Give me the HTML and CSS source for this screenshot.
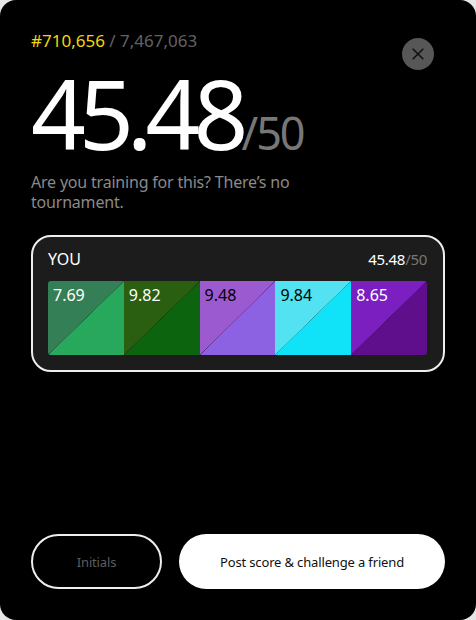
FILE: index.html
```html
<!DOCTYPE html>
<html lang="en">
<head>
<meta charset="utf-8">
<title>Score</title>
<link rel="stylesheet" href="styles.css">
</head>
<body>
<div class="panel">
  <button class="close" aria-label="Close">
    <svg width="14" height="14" viewBox="0 0 14 14"><path d="M2.2 2.2L11.8 11.8M11.8 2.2L2.2 11.8" stroke="#111" stroke-width="1.6" stroke-linecap="round"/></svg>
  </button>
  <div class="rank"><span class="rank-pos">#710,656</span> / 7,467,063</div>
  <div class="score"><span class="score-val">45.48</span><span class="score-max">/50</span></div>
  <p class="note">Are you training for this? There’s no tournament.</p>

  <div class="card">
    <div class="card-head">
      <span class="who">YOU</span>
      <span class="total">45.48<span class="total-max">/50</span></span>
    </div>
    <div class="bar">
      <div class="seg seg-1">7.69</div>
      <div class="seg seg-2">9.82</div>
      <div class="seg seg-3">9.48</div>
      <div class="seg seg-4">9.84</div>
      <div class="seg seg-5">8.65</div>
    </div>
  </div>

  <div class="actions">
    <button class="btn btn-ghost">Initials</button>
    <button class="btn btn-solid">Post score &amp; challenge a friend</button>
  </div>
</div>
</body>
</html>
```
FILE: styles.css
```css
* { box-sizing: border-box; }

html, body {
  margin: 0;
  height: 100%;
  background: #e6e6e6;
}

body {
  font-family: "Noto Sans", "Open Sans", sans-serif;
  color: #fff;
}

.panel {
  position: relative;
  height: 620px;
  background: #000;
  border-radius: 16px;
  padding: 29px 31px 31px;
  display: flex;
  flex-direction: column;
}

.close {
  position: absolute;
  top: 38px;
  right: 42px;
  width: 32px;
  height: 32px;
  border: 0;
  border-radius: 50%;
  background: #575757;
  display: flex;
  align-items: center;
  justify-content: center;
  padding: 0;
}

.rank {
  font-size: 17px;
  line-height: 24px;
  color: #626262;
}
.rank-pos { color: #f4d40a; }

.score {
  margin-top: 12px;
  line-height: 96px;
  height: 96px;
  white-space: nowrap;
}
.score-val {
  font-size: 96px;
  letter-spacing: -7px;
  color: #fff;
}
.score-max {
  font-size: 45px;
  color: #777;
  letter-spacing: -2px;
}

.note {
  margin: 11px 0 0;
  max-width: 290px;
  font-size: 16px;
  line-height: 20px;
  letter-spacing: -0.2px;
  color: #8a8a8a;
}

.card {
  margin-top: 23px;
  border: 2px solid #eee;
  border-radius: 20px;
  background: #1c1c1c;
  padding: 11px 16px 15px 15px;
}

.card-head {
  display: flex;
  justify-content: space-between;
  align-items: center;
  height: 22px;
  font-size: 16px;
  line-height: 22px;
}
.total { font-size: 15px; letter-spacing: -0.3px; }
.total-max { color: #777; }

.bar {
  margin-top: 11px;
  display: grid;
  grid-template-columns: repeat(5, 1fr);
  height: 74px;
  border-radius: 3px;
  overflow: hidden;
}

.seg {
  padding: 4px 5px;
  font-size: 16px;
  line-height: 20px;
  color: #fff;
}

.seg-1 { background: linear-gradient(to bottom right, #357f57 calc(50% - 0.5px), #1f5a3a 50%, #27a85c calc(50% + 0.5px)); }
.seg-2 { background: linear-gradient(to bottom right, #2a5e10 calc(50% - 0.5px), #163c08 50%, #0d640f calc(50% + 0.5px)); }
.seg-3 { background: linear-gradient(to bottom right, #9b5ad0 calc(50% - 0.5px), #5b2f8a 50%, #8c62e2 calc(50% + 0.5px)); color: #000; }
.seg-4 { background: linear-gradient(to bottom right, #52e2f1 calc(50% - 0.5px), #2a9aa6 50%, #10e2f8 calc(50% + 0.5px)); color: #000; }
.seg-5 { background: linear-gradient(to bottom right, #7b1fc0 calc(50% - 0.5px), #4a0c78 50%, #5f0e8c calc(50% + 0.5px)); }

.actions {
  margin-top: auto;
  display: flex;
  gap: 17px;
}

.btn {
  height: 55px;
  border-radius: 28px;
  font-family: inherit;
  font-size: 13px;
  letter-spacing: -0.15px;
  cursor: pointer;
}
.btn-ghost {
  width: 131px;
  flex: none;
  background: #000;
  border: 2px solid #eee;
  color: #5e5e5e;
}
.btn-solid {
  flex: 1;
  background: #fff;
  border: 0;
  color: #111;
}
```
